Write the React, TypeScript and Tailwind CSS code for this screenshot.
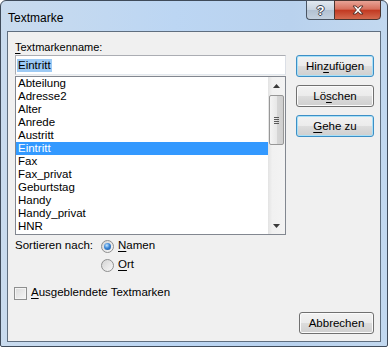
import React from "react";

const items = [
  "Abteilung",
  "Adresse2",
  "Alter",
  "Anrede",
  "Austritt",
  "Eintritt",
  "Fax",
  "Fax_privat",
  "Geburtstag",
  "Handy",
  "Handy_privat",
  "HNR",
];

const Key: React.FC<{ children: React.ReactNode }> = ({ children }) => (
  <span className="underline decoration-1 underline-offset-[2px]">{children}</span>
);

const DlgButton: React.FC<{ children: React.ReactNode; active?: boolean; className?: string }> = ({
  children,
  active,
  className,
}) => (
  <div
    className={`h-[22px] rounded-[3px] border flex items-center justify-center leading-[13px] bg-[linear-gradient(to_bottom,#f2f2f2_0%,#ebebeb_50%,#dddddd_50%,#cfcfcf_100%)] ${
      active
        ? "border-[#3c8fc6] shadow-[inset_0_0_0_1px_#a9e0f7]"
        : "border-[#707070] shadow-[inset_0_0_0_1px_#fbfbfb]"
    } ${className ?? "w-[78px]"}`}
  >
    {children}
  </div>
);

const Radio: React.FC<{ checked?: boolean }> = ({ checked }) => (
  <div className="w-[13px] h-[13px] rounded-full border border-[#8e8f8f] bg-[linear-gradient(135deg,#d4d4d4,#f8f8f8)] flex items-center justify-center shrink-0">
    {checked && (
      <div className="w-[7px] h-[7px] rounded-full bg-[radial-gradient(circle_at_40%_35%,#c4e6ff_0%,#3b86d6_45%,#1a4f96_100%)]" />
    )}
  </div>
);

const Arrow: React.FC<{ down?: boolean }> = ({ down }) => (
  <svg width="7" height="4" viewBox="0 0 7 4">
    {down ? <polygon points="0,0 7,0 3.5,4" fill="#3a3a3a" /> : <polygon points="3.5,0 7,4 0,4" fill="#3a3a3a" />}
  </svg>
);

export default function App() {
  return (
    <div className="w-[390px] h-[347px] bg-white overflow-hidden font-['Liberation_Sans',Arial,sans-serif] text-[11.5px] text-black">
      <div className="w-[388px] h-[347px] rounded-t-[6px] rounded-b-[2px] border border-[#3f4b5a] bg-[linear-gradient(to_right,#c9dbee_0%,#bcd6f3_45%,#b9d2ee_75%,#c2d8ef_100%)] flex flex-col px-[6px] pb-[4px]">
        {/* title bar */}
        <div className="h-[30px] flex justify-between shrink-0">
          <div className="pl-[1px] pt-[10px] text-[12px] leading-[15px]">Textmarke</div>
          <div className="flex h-[20px] -mt-[1px]">
            <div className="w-[28px] h-[20px] rounded-bl-[4px] border border-[#4a5563] border-r-0 bg-[linear-gradient(to_bottom,#e2e9f1_0%,#c7d3e0_50%,#b2c1d2_51%,#c4d1df_100%)] flex items-center justify-center">
              <span className="font-bold text-[13px] leading-[13px] text-white [text-shadow:1px_0_0_#3b4350,-1px_0_0_#3b4350,0_1px_0_#3b4350,0_-1px_0_#3b4350]">
                ?
              </span>
            </div>
            <div className="w-[47px] h-[20px] rounded-br-[4px] border border-[#4a3530] bg-[linear-gradient(to_bottom,#e8a396_0%,#d7705d_45%,#c23a22_52%,#d46a4f_100%)] flex items-center justify-center">
              <svg width="12" height="10" viewBox="0 0 12 10">
                <polygon
                  points="1,1 4,1 6,3.3 8,1 11,1 7.6,5 11,9 8,9 6,6.7 4,9 1,9 4.4,5"
                  fill="#ffffff"
                  stroke="#4b2a25"
                  strokeWidth="0.9"
                  strokeLinejoin="round"
                />
              </svg>
            </div>
          </div>
        </div>

        {/* client area */}
        <div className="flex-1 border border-[#5f6e7f] bg-[#f0f0f0] flex pl-[7px] pr-[6px] pt-[8px] pb-[7px]">
          <div className="w-[271px] flex flex-col">
            <div className="h-[15px] leading-[15px] text-[11px]">
              <Key>T</Key>extmarkenname:
            </div>
            <div className="h-[20px] border border-[#abadb3] border-b-[#e3e9ef] border-r-[#dbdfe6] bg-white flex items-center pl-[1px]">
              <span className="bg-[#9dcaf4] px-[1px] leading-[13px]">Eintritt</span>
            </div>
            <div className="mt-[1px] h-[159px] border border-[#828790] bg-white flex">
              <div className="flex-1 flex flex-col">
                {items.map((item) => (
                  <div
                    key={item}
                    className={`h-[13px] leading-[13px] pl-[2px] ${item === "Eintritt" ? "bg-[#3399ff] text-white" : ""}`}
                  >
                    {item}
                  </div>
                ))}
              </div>
              <div className="w-[17px] flex flex-col bg-[linear-gradient(to_right,#e3e3e3_0%,#f1f1f1_25%,#f3f3f3_100%)]">
                <div className="h-[17px] flex items-center justify-center">
                  <Arrow />
                </div>
                <div className="mt-[1px] mx-auto w-[15px] h-[50px] rounded-[2px] border border-[#979797] bg-[linear-gradient(to_right,#f4f4f4_0%,#e8e8e8_50%,#d6d6d6_51%,#cfcfcf_100%)] flex flex-col items-center justify-center gap-[1px]">
                  <div className="w-[5px] h-[1px] bg-[#5a5a5a]" />
                  <div className="w-[5px] h-[1px] bg-[#5a5a5a]" />
                  <div className="w-[5px] h-[1px] bg-[#5a5a5a]" />
                  <div className="w-[5px] h-[1px] bg-[#5a5a5a]" />
                </div>
                <div className="flex-1" />
                <div className="h-[17px] flex items-center justify-center">
                  <Arrow down />
                </div>
              </div>
            </div>

            <div className="mt-[2px] h-[18px] flex items-center">
              <div className="w-[86px]">Sortieren nach:</div>
              <Radio checked />
              <div className="ml-[4px]">
                <Key>N</Key>amen
              </div>
            </div>
            <div className="mt-[1px] h-[18px] flex items-center pl-[86px]">
              <Radio />
              <div className="ml-[4px]">
                <Key>O</Key>rt
              </div>
            </div>
            <div className="mt-[10px] h-[18px] flex items-center -ml-[1px]">
              <div className="w-[13px] h-[13px] border border-[#8e8f8f] bg-[linear-gradient(135deg,#dadada,#f6f6f6)] shadow-[inset_0_0_0_1px_#f4f4f4] shrink-0" />
              <div className="ml-[4px]">
                <Key>A</Key>usgeblendete Textmarken
              </div>
            </div>
          </div>

          <div className="ml-[9px] flex-1 flex flex-col items-end pt-[15px]">
            <DlgButton active>
              Hin<Key>z</Key>ufügen
            </DlgButton>
            <DlgButton className="w-[78px] mt-[8px]">
              Lö<Key>s</Key>chen
            </DlgButton>
            <DlgButton active className="w-[78px] mt-[8px]">
              <Key>G</Key>ehe zu
            </DlgButton>
            <DlgButton className="w-[75px] mt-auto">Abbrechen</DlgButton>
          </div>
        </div>
      </div>
    </div>
  );
}
